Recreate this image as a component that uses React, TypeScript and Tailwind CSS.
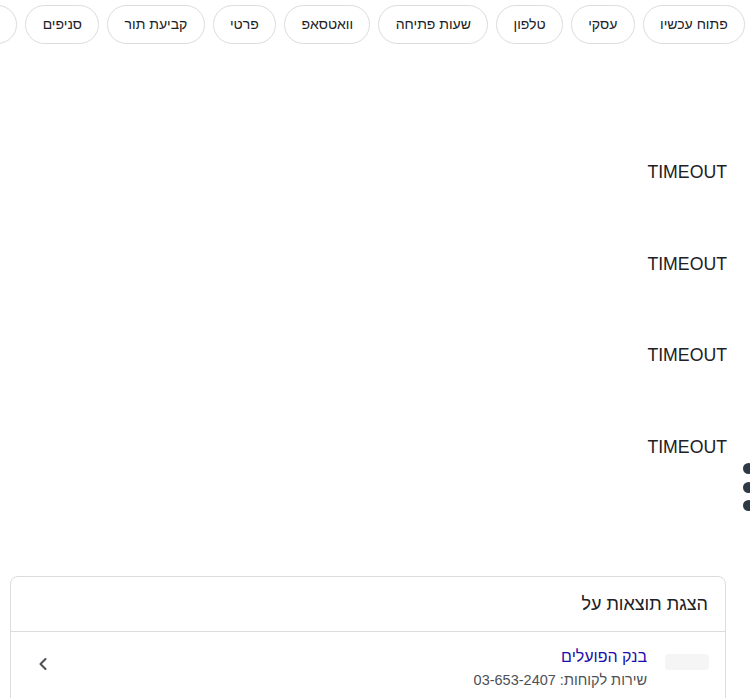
import { ChevronLeft } from 'lucide-react';

const chips = ['פתוח עכשיו', 'עסקי', 'טלפון', 'שעות פתיחה', 'וואטסאפ', 'פרטי', 'קביעת תור', 'סניפים', 'כתובות'];

export default function App() {
  return (
    <div dir="rtl" className="w-[750px] h-[698px] overflow-hidden bg-white text-[#202124] font-['Liberation_Sans',Arial,sans-serif]">
      {/* chips row */}
      <div className="flex gap-2 pt-[5px] pr-[5px] overflow-hidden">
        {chips.map((c) => (
          <div
            key={c}
            className="shrink-0 h-[39px] px-[16.3px] flex items-center rounded-full border border-[#dadce0] text-[14px] whitespace-nowrap"
          >
            {c}
          </div>
        ))}
      </div>

      {/* results */}
      <div className="mt-[83px] pr-[23px]">
        {[0, 1, 2, 3].map((i) => (
          <div key={i} className="h-[91.5px] flex items-center text-[17.7px]" dir="ltr">
            <span className="ml-auto">TIMEOUT</span>
          </div>
        ))}
      </div>

      {/* loading dots */}
      <div className="flex flex-col gap-[7.5px] items-start mr-[-4px] mt-[-30px]">
        <span className="w-[11px] h-[11px] rounded-full bg-[#2d3a46]" />
        <span className="w-[11px] h-[11px] rounded-full bg-[#2d3a46]" />
        <span className="w-[11px] h-[11px] rounded-full bg-[#2d3a46]" />
      </div>

      {/* card */}
      <div className="mt-[65px] mr-[24px] ml-[10px] border border-[#dadce0] rounded-lg">
        <div className="h-[55px] flex items-center pr-[17px] border-b border-[#dadce0] text-[18px]">
          הצגת תוצאות על
        </div>
        <div className="flex items-start pr-4 pl-[22px] pt-[21px] pb-6">
          <div className="w-[44px] h-[16px] rounded bg-[#f5f5f5] mt-[1px]" />
          <div className="mr-[18px] flex flex-col">
            <span className="text-[16px] text-[#1a0dab] leading-5 mt-[-6px]">בנק הפועלים</span>
            <span className="text-[14.5px] text-[#4d5156] mt-[3px]">שירות לקוחות: 03-653-2407</span>
          </div>
          <ChevronLeft className="mr-auto w-5 h-5 text-[#4d5156] mt-[1px]" strokeWidth={2.5} />
        </div>
      </div>
    </div>
  );
}
